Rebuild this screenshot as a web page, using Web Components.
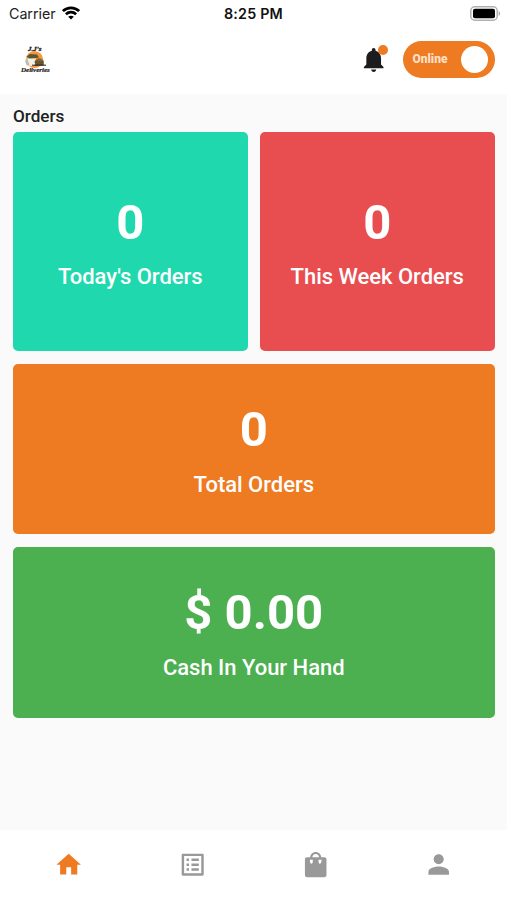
<!DOCTYPE html>
<html lang="en">
<head>
<meta charset="utf-8">
<title>Delivery dashboard</title>
<style>
html,body{margin:0;height:100%;background:#fafafa;font-family:Roboto,sans-serif}
</style>
</head>
<body>
<delivery-app></delivery-app>
<script>
const define = (name, html) => {
  const t = document.createElement('template');
  t.innerHTML = html;
  customElements.define(name, class extends HTMLElement {
    constructor() {
      super();
      this.attachShadow({mode: 'open'}).append(t.content.cloneNode(true));
    }
  });
};

define('status-bar', `
<style>
:host{display:grid;grid-template-columns:1fr auto 1fr;align-items:center;height:28px;padding:0 6px 0 9px;box-sizing:border-box;font:400 14.3px/28px Inter,sans-serif;color:#222}
.left{display:flex;align-items:center;gap:6px}
.carrier{letter-spacing:-.05px}
.left svg{margin-bottom:2px}
.time{font-weight:600;letter-spacing:.2px;color:#111;padding-right:3px}
.battery{justify-self:end;margin-bottom:2px}
svg{display:block}
</style>
<div class="left"><span class="carrier">Carrier</span>
<svg width="18" height="14" viewBox="0 0 18 14" fill="none" stroke="#000" stroke-width="2.7"><path d="M.9 5.1C5.5.8 12.5.8 17.100 5.100M3.900 8.200C6.800 5.500 11.200 5.500 14.100 8.200"/><path d="M9 13.600L6.200 10.800C7.800 9.400 10.200 9.400 11.800 10.800Z" fill="#000" stroke="none"/></svg></div>
<span class="time">8:25 PM</span>
<svg class="battery" width="31" height="15" viewBox="0 0 31 15"><rect x=".8" y=".8" width="26.400" height="13.400" rx="4" fill="#fff" stroke="#b0b0b0" stroke-width="1.500"/><rect x="3" y="2.800" width="22" height="9.400" rx="2" fill="#000"/><path d="M28.600 5v5c2-.8 2-4.200 0-5z" fill="#aaa"/></svg>`);

define('brand-logo', `
<style>:host{display:block}svg{display:block;overflow:visible}text{font-family:"Liberation Serif",serif;font-weight:700;font-style:italic;fill:#1d1a1a}</style>
<svg width="32" height="31" viewBox="0 0 32 31">
<circle cx="14.500" cy="13.500" r="8.600" fill="#f7973a"/>
<path d="M6.500 10.500L10 8L17 8.500L19 11.500L10 13Z" fill="#5d5730"/>
<path d="M7 12.500H16L14.500 20H9.500Z" fill="#f4efe5"/>
<path d="M5 15L7 12L9 18L7 20Z" fill="#b9bfb6"/>
<path d="M15 14.500Q19 10 23.500 14.500V19.500H15Z" fill="#8a6234"/>
<path d="M14.500 16H24M15 18H24" stroke="#404b29" stroke-width="1.200"/>
<path d="M12 19.200H26" stroke="#1d1a1a" stroke-width="1"/>
<text x="8" y="5.400" font-size="6" textLength="13.500" lengthAdjust="spacingAndGlyphs" stroke="#1d1a1a" stroke-width=".3">J.J's</text>
<text x="1" y="25.500" font-size="7" stroke="#1d1a1a" stroke-width=".2">Deliveries</text>
</svg>`);

define('notification-bell', `
<style>:host{display:block;position:relative;width:29.4px;height:29.4px}svg{display:block;width:100%;height:100%}
.dot{position:absolute;left:19px;top:.5px;width:10px;height:10px;border-radius:50%;background:#ee7a21}</style>
<svg viewBox="0 0 24 24" fill="#1c1c1e"><path d="M12 22c1.100 0 2-.9 2-2h-4c0 1.100.9 2 2 2zm6-6v-5c0-3.070-1.630-5.640-4.500-6.320V4c0-.83-.67-1.500-1.500-1.500s-1.500.67-1.500 1.500v.68C7.640 5.360 6 7.920 6 11v5l-2 2v1h16v-1l-2-2z"/></svg>
<span class="dot"></span>`);

define('status-toggle', `
<style>:host{display:flex;align-items:center;justify-content:space-between;box-sizing:border-box;width:92px;height:37px;padding:0 7px 0 10px;border-radius:19px;background:#ee7a21;color:#ffdfc5;font:900 12px/37px Roboto,sans-serif}
.knob{width:27px;height:27px;border-radius:50%;background:#fff}</style>
<slot></slot><span class="knob"></span>`);

define('app-header', `
<style>:host{display:flex;align-items:center;height:66px;padding:0 12.500px 3px 20px;box-sizing:border-box}
brand-logo{margin-right:auto;margin-top:3px}status-toggle{margin-left:14.500px}</style>
<brand-logo></brand-logo><notification-bell></notification-bell><status-toggle>Online</status-toggle>`);

define('stat-card', `
<style>:host{display:flex;flex-direction:column;align-items:center;justify-content:center;box-sizing:border-box;padding-top:1px;border-radius:5px;background:var(--card);color:#fff}
.value{font-weight:700;font-size:49px;line-height:57px}
.label{font-weight:500;font-size:22px;line-height:26px;margin-top:13.500px;letter-spacing:-.02px}</style>
<div class="value"><slot name="value"></slot></div><div class="label"><slot></slot></div>`);

define('icon-nav', `
<style>:host{display:flex;align-items:center;height:70px;padding:0 6.500px 0 7.500px;box-sizing:border-box;background:#fff;color:#999}
span{flex:1;display:flex;justify-content:center}svg{width:29.4px;height:29.4px;fill:currentColor}.on{color:#ee7a21}</style>
<span class="on"><svg viewBox="0 0 24 24"><path d="M10 20v-6h4v6h5v-8h3L12 3 2 12h3v8z"/></svg></span>
<span><svg viewBox="0 0 24 24"><path d="M19 5v14H5V5h14m1.100-2H3.900c-.5 0-.9.4-.9.9v16.200c0 .4.4.9.9.9h16.200c.4 0 .9-.5.9-.9V3.900c0-.5-.5-.9-.9-.9zM11 7h6v2h-6V7zm0 4h6v2h-6v-2zm0 4h6v2h-6zM7 7h2v2H7zm0 4h2v2H7zm0 4h2v2H7z"/></svg></span>
<span><svg viewBox="0 0 24 24"><path fill-rule="evenodd" d="M19 6h-2.500C16.500 3.600 14.500 1.600 12 1.600S7.500 3.600 7.500 6H5c-1.100 0-1.800.7-1.800 1.800v12.700c0 1.100.7 1.800 1.800 1.800h14c1.100 0 1.800-.7 1.800-1.800V7.800C20.800 6.700 20.100 6 19 6zM12 3.300c1.500 0 2.700 1.200 2.700 2.700H9.300c0-1.500 1.200-2.700 2.700-2.700zM8.700 11.300c-.9 0-1.500-1.100-1.500-3.300h2.500c0 2.200-.3 3.300-1 3.300zm6.600 0c-.7 0-1-1.100-1-3.300h2.500c0 2.200-.6 3.300-1.500 3.300z"/></svg></span>
<span><svg viewBox="0 0 24 24"><path d="M12 11.600c2.200 0 4.100-1.600 4.100-4s-1.800-4.200-4.100-4.200-4.100 1.800-4.100 4.200 1.900 4 4.100 4zm0 1.900c-2.800 0-8.400 1.300-8.400 4.200v2.500h16.800v-2.500c0-2.900-5.600-4.200-8.400-4.200z"/></svg></span>`);

define('delivery-app', `
<style>
:host{display:flex;flex-direction:column;width:507px;height:900px;background:#fafafa}
.top{background:#fff}
main{flex:1;padding:11px 12.500px 0 13px}
h1{margin:0;font:500 17.150px/22px Roboto,sans-serif;color:#222;height:26.500px}
.grid{display:grid;grid-template-columns:1fr 1fr;grid-template-rows:219.500px 170.500px 171px;gap:12.500px}
.wide{grid-column:1/-1}
</style>
<div class="top"><status-bar></status-bar><app-header></app-header></div>
<main><h1>Orders</h1>
<div class="grid">
<stat-card style="--card:#20d8ad"><span slot="value">0</span>Today's Orders</stat-card>
<stat-card style="--card:#e84e50"><span slot="value">0</span>This Week Orders</stat-card>
<stat-card class="wide" style="--card:#ee7a21"><span slot="value">0</span>Total Orders</stat-card>
<stat-card class="wide" style="--card:#4caf50"><span slot="value">$ 0.00</span>Cash In Your Hand</stat-card>
</div></main>
<icon-nav></icon-nav>`);
</script>
</body>
</html>
